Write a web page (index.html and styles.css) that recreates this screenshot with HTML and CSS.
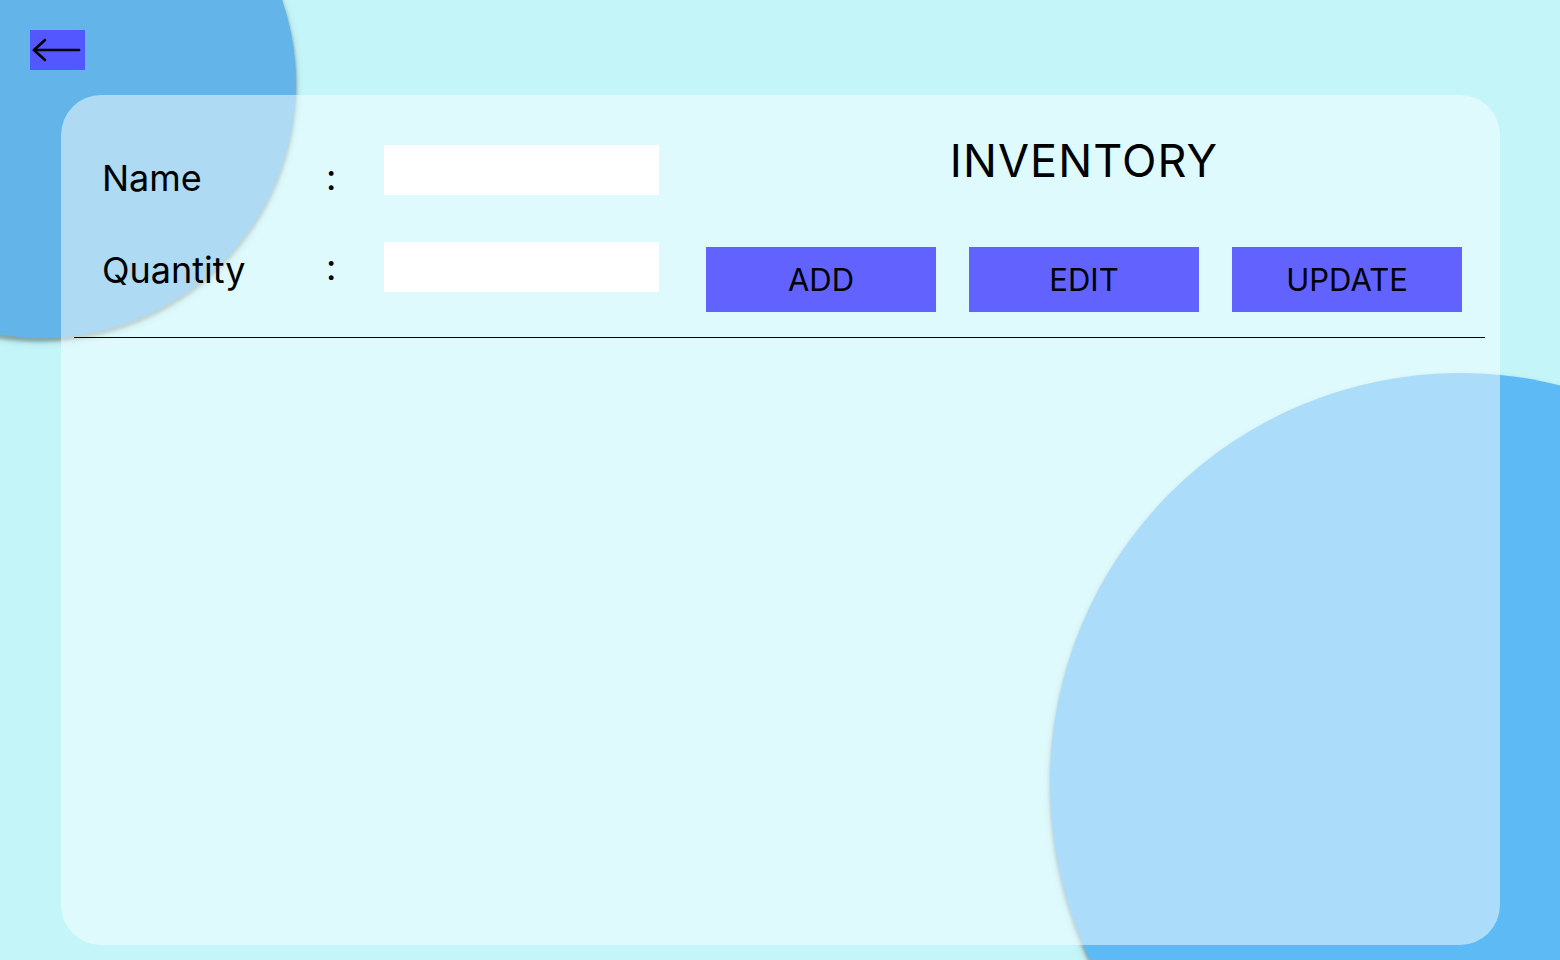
FILE: index.html
```html
<!DOCTYPE html>
<html lang="en">
<head>
<meta charset="utf-8">
<title>Inventory</title>
<link rel="stylesheet" href="styles.css">
</head>
<body>
<div class="screen">
  <div class="blob blob-tl"></div>
  <div class="blob blob-br"></div>

  <button class="back" aria-label="Back">
    <svg width="55" height="40" viewBox="0 0 55 40" fill="none" stroke="#000" stroke-width="2.6" stroke-linecap="round" stroke-linejoin="round">
      <path d="M4 20 H49"/>
      <path d="M15 10 L4 20 L15 30"/>
    </svg>
  </button>

  <main class="card">
    <div class="top">
      <div class="form">
        <div class="labels">
          <div class="label">Name</div>
          <div class="label">Quantity</div>
        </div>
        <div class="colons">
          <div class="colon">:</div>
          <div class="colon">:</div>
        </div>
        <div class="inputs">
          <input class="field" type="text">
          <input class="field" type="text">
        </div>
      </div>
      <div class="actions">
        <h1 class="title">INVENTORY</h1>
        <div class="buttons">
          <button class="btn">ADD</button>
          <button class="btn">EDIT</button>
          <button class="btn">UPDATE</button>
        </div>
      </div>
    </div>
    <div class="divider"></div>
  </main>
</div>
</body>
</html>
```

FILE: styles.css
```css
* { box-sizing: border-box; }

html, body {
  margin: 0;
  padding: 0;
}

body {
  background: #C4F5F9;
  font-family: "Inter", "Liberation Sans", sans-serif;
  color: #000;
}

.screen {
  position: relative;
  width: 1560px;
  height: 960px;
  overflow: hidden;
  padding: 30px 0 0 0;
}

.blob {
  position: absolute;
  border-radius: 50%;
  box-shadow: 0 3px 3px 1px rgba(0, 0, 0, 0.22), 0 4px 8px rgba(0, 0, 0, 0.16);
}

.blob-tl {
  left: -214px;
  top: -172px;
  width: 510px;
  height: 510px;
  background: #62B4E9;
}

.blob-br {
  left: 1050px;
  top: 373px;
  width: 820px;
  height: 820px;
  background: #5DBAF5;
}

.back {
  position: relative;
  display: block;
  margin: 0 0 0 30px;
  width: 55px;
  height: 40px;
  padding: 0;
  border: 0;
  background: #5257FF;
  cursor: pointer;
}

.back svg { display: block; }

.card {
  position: relative;
  margin: 25px 0 0 61px;
  width: 1439px;
  height: 850px;
  border-radius: 40px;
  background: rgba(250, 255, 255, 0.5);
}

.top {
  display: flex;
  padding: 39px 0 0 41px;
}

.form {
  display: flex;
}

.labels {
  display: flex;
  flex-direction: column;
  gap: 50px;
  width: 224px;
  margin-top: 23px;
}

.label, .colon {
  font-size: 36px;
  line-height: 42px;
  height: 42px;
}

.colons {
  display: flex;
  flex-direction: column;
  gap: 48px;
  width: 58px;
  margin-top: 22px;
}

.inputs {
  display: flex;
  flex-direction: column;
  gap: 47px;
  margin-top: 11px;
}

.field {
  display: block;
  width: 275px;
  height: 50px;
  border: 0;
  background: #FFFFFF;
  margin: 0;
  padding: 0 10px;
  font: inherit;
  font-size: 24px;
}

.actions {
  margin-left: 47px;
  width: 756px;
  display: flex;
  flex-direction: column;
  align-items: center;
}

.title {
  margin: 0;
  font-size: 45px;
  font-weight: 400;
  letter-spacing: 1.1px;
  line-height: 54px;
  height: 54px;
}

.buttons {
  display: flex;
  gap: 33px;
  margin-top: 59px;
}

.btn {
  width: 230px;
  height: 65px;
  border: 0;
  padding: 0;
  background: #6262FF;
  color: #000;
  font-family: "Inter", "Liberation Sans", sans-serif;
  font-size: 31px;
  font-weight: 400;
  cursor: pointer;
}

.divider {
  margin: 25px 15px 0 13px;
  height: 1px;
  background: #000;
}
```
